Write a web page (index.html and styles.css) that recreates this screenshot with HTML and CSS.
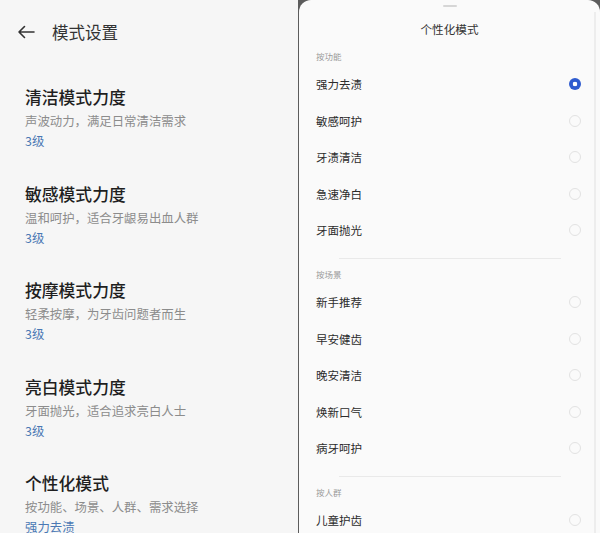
FILE: index.html
```html
<!DOCTYPE html>
<html lang="zh-CN">
<head>
<meta charset="utf-8">
<link rel="stylesheet" href="styles.css">
</head>
<body>
<div class="page">
  <section class="left">
    <header class="topbar">
      <svg class="back" width="18" height="14" viewBox="0 0 18 14"><path d="M17 7H2M7.5 1.5L2 7l5.5 5.5" fill="none" stroke="#333" stroke-width="1.6" stroke-linecap="round" stroke-linejoin="round"/></svg>
      <span class="topbar-title">模式设置</span>
    </header>
    <div class="setting">
      <div class="setting-title">清洁模式力度</div>
      <div class="setting-sub">声波动力，满足日常清洁需求</div>
      <div class="setting-value">3级</div>
    </div>
    <div class="setting">
      <div class="setting-title">敏感模式力度</div>
      <div class="setting-sub">温和呵护，适合牙龈易出血人群</div>
      <div class="setting-value">3级</div>
    </div>
    <div class="setting">
      <div class="setting-title">按摩模式力度</div>
      <div class="setting-sub">轻柔按摩，为牙齿问题者而生</div>
      <div class="setting-value">3级</div>
    </div>
    <div class="setting">
      <div class="setting-title">亮白模式力度</div>
      <div class="setting-sub">牙面抛光，适合追求亮白人士</div>
      <div class="setting-value">3级</div>
    </div>
    <div class="setting">
      <div class="setting-title">个性化模式</div>
      <div class="setting-sub">按功能、场景、人群、需求选择</div>
      <div class="setting-value">强力去渍</div>
    </div>
  </section>
  <section class="right">
    <div class="sheet">
      <div class="handle"></div>
      <div class="sheet-title">个性化模式</div>
      <div class="group first">
        <div class="group-label">按功能</div>
        <div class="option"><span>强力去渍</span><i class="radio on"></i></div>
        <div class="option"><span>敏感呵护</span><i class="radio"></i></div>
        <div class="option"><span>牙渍清洁</span><i class="radio"></i></div>
        <div class="option"><span>急速净白</span><i class="radio"></i></div>
        <div class="option"><span>牙面抛光</span><i class="radio"></i></div>
      </div>
      <div class="divider"></div>
      <div class="group">
        <div class="group-label">按场景</div>
        <div class="option"><span>新手推荐</span><i class="radio"></i></div>
        <div class="option"><span>早安健齿</span><i class="radio"></i></div>
        <div class="option"><span>晚安清洁</span><i class="radio"></i></div>
        <div class="option"><span>焕新口气</span><i class="radio"></i></div>
        <div class="option"><span>病牙呵护</span><i class="radio"></i></div>
      </div>
      <div class="divider"></div>
      <div class="group">
        <div class="group-label">按人群</div>
        <div class="option"><span>儿童护齿</span><i class="radio"></i></div>
      </div>
      <div class="scrollbar"></div>
    </div>
  </section>
</div>
</body>
</html>
```
FILE: styles.css
```css
* { box-sizing: border-box; margin: 0; padding: 0; }
html, body { width: 600px; height: 533px; overflow: hidden; }
body {
  font-family: "Noto Sans CJK SC", "Noto Sans", sans-serif;
  background: #f6f6f6;
}
.page { display: flex; width: 600px; height: 533px; }
.left {
  width: 298px;
  background: #f6f6f6;
  padding-left: 25px;
  overflow: hidden;
}
.topbar {
  height: 64px;
  display: flex;
  align-items: center;
  margin-left: -8px;
  margin-bottom: 21px;
}
.back { display: block; margin-right: 17px; }
.topbar-title { font-size: 16.5px; color: #333; line-height: 24px; }
.setting { height: 96.5px; }
.setting-title {
  font-size: 16.8px; line-height: 24px; color: #1f1f1f; font-weight: 500;
}
.setting-sub {
  margin-top: 3px; font-size: 12.4px; line-height: 18px; color: #8c8c8c;
}
.setting-value {
  margin-top: 2px; font-size: 12.4px; line-height: 18px; color: #4a78b4;
}
.right {
  width: 302px;
  background: #5c5c5c;
  display: flex;
}
.sheet {
  position: relative;
  flex: 1;
  margin-left: 1px;
  background: #fafafa;
  border-radius: 12px 12px 0 0;
  padding: 0 0 0 17px;
  overflow: hidden;
}
.handle {
  width: 14px; height: 2px; border-radius: 1px;
  background: #d6d6d6;
  margin: 5px auto 0 127px;
}
.sheet-title {
  height: 37px; line-height: 30px; padding-top: 7px;
  margin-left: -17px;
  text-align: center; font-size: 11.6px; color: #333;
}
.group-label {
  margin-top: 6px; margin-bottom: 4px;
  height: 12px; line-height: 12px;
  font-size: 8.5px; color: #9a9a9a;
}
.option {
  height: 36.5px;
  display: flex; align-items: center; justify-content: space-between;
  padding-right: 19px;
  font-size: 11.5px; color: #2c2c2c;
}
.radio {
  display: block; width: 12px; height: 12px; border-radius: 50%;
  border: 1px solid #e2e2e2;
}
.radio.on {
  border: none;
  background: radial-gradient(circle, #fff 0 2px, #2f5ccf 2.6px);
}
.divider {
  height: 1px; background: #e9e9e9;
  margin: 9.5px 39px 0 23px;
}
.divider + .group .group-label { margin-top: 9px; }
.scrollbar {
  position: absolute; right: 4px; top: 12px; bottom: 0;
  width: 2px; background: #ededed;
}
```
